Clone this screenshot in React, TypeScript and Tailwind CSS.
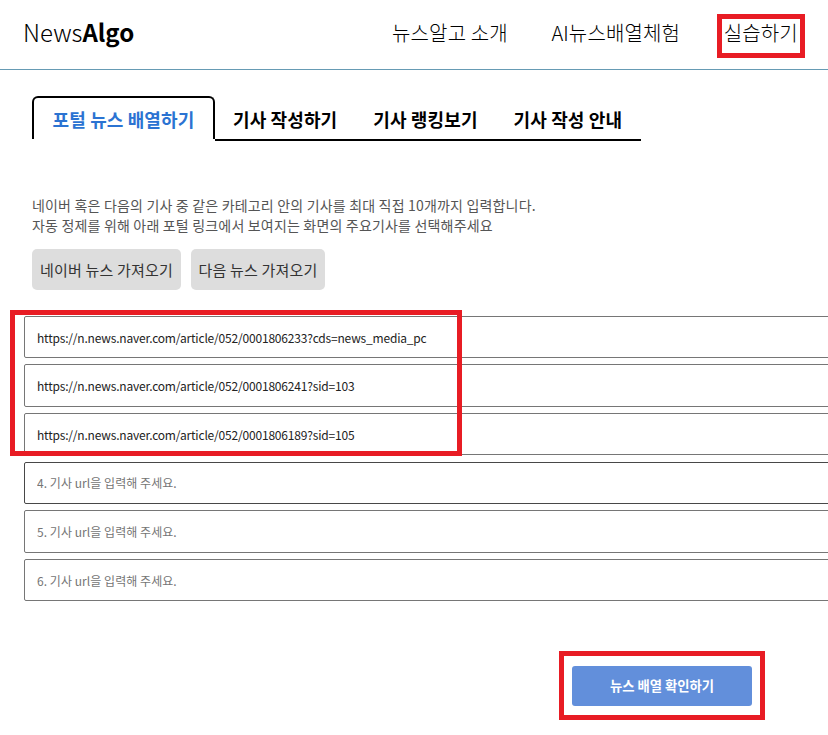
import React from 'react';

const tabs = ['기사 작성하기', '기사 랭킹보기', '기사 작성 안내'];

const articles = [
  'https://n.news.naver.com/article/052/0001806233?cds=news_media_pc',
  'https://n.news.naver.com/article/052/0001806241?sid=103',
  'https://n.news.naver.com/article/052/0001806189?sid=105',
  '',
  '',
  '',
];

const App = () => {
  return (
    <div className="relative w-[828px] h-[735px] overflow-hidden bg-white font-['Noto_Sans_CJK_KR',sans-serif] text-black">
      <header className="flex h-[70px] items-center border-b border-[#669bb4] pl-[23px] pb-[5px]">
        <div className="w-[369px] text-[24px] leading-8 font-light">
          News<span className="font-bold">Algo</span>
        </div>
        <nav className="flex gap-[43.5px] pt-px text-[20px] leading-8 font-light tracking-[0.15px] whitespace-nowrap">
          <a>뉴스알고 소개</a>
          <a>AI뉴스배열체험</a>
          <a>실습하기</a>
        </nav>
      </header>

      <div className="flex pl-8 pt-[26px] text-[18px] font-bold tracking-[0.12px] whitespace-nowrap">
        <div className="flex h-[43px] w-[183px] items-center justify-center rounded-t-md border-2 border-b-0 border-black pt-px text-[#2b73d2]">
          포털 뉴스 배열하기
        </div>
        <div className="flex h-[45px] w-[426px] items-center gap-9 border-b-2 border-black pl-[18px] pt-[3px]">
          {tabs.map((tab) => (
            <span key={tab}>{tab}</span>
          ))}
        </div>
      </div>

      <div className="mt-[54px] pl-8 text-[14px] leading-5 tracking-[0.18px] text-[#555]">
        <p>네이버 혹은 다음의 기사 중 같은 카테고리 안의 기사를 최대 직접 10개까지 입력합니다.</p>
        <p>자동 정제를 위해 아래 포털 링크에서 보여지는 화면의 주요기사를 선택해주세요</p>
      </div>

      <div className="mt-[14px] flex gap-[10px] pl-8 text-[15px] tracking-[0.2px] text-[#333] whitespace-nowrap">
        <button className="h-[41px] w-[149px] rounded-[5px] bg-[#ddd] pt-px">네이버 뉴스 가져오기</button>
        <button className="h-[41px] w-[134px] rounded-[5px] bg-[#ddd] pt-px">다음 뉴스 가져오기</button>
      </div>

      <div className="mt-[25.8px] flex flex-col gap-[6.1px] pl-6">
        {articles.map((url, index) => (
          <input
            key={index}
            className={`h-[42.5px] w-[900px] rounded-[2px] border px-3 text-[12px] tracking-[-0.19px] text-[#222] placeholder:tracking-[0.05px] placeholder:text-[#757575] ${
              index === 3 ? 'border-[#484848]' : 'border-[#767676]'
            }`}
            defaultValue={url}
            placeholder={`${index + 1}. 기사 url을 입력해 주세요.`}
          />
        ))}
      </div>

      <button className="mt-[64.7px] ml-[572px] h-10 w-[180px] rounded-[3px] bg-[#628fdb] text-[13.33px] font-bold text-white">
        뉴스 배열 확인하기
      </button>

      {/* highlight boxes over the page */}
      <div className="absolute left-[717px] top-[14px] h-[44px] w-[88px] border-[5px] border-[#e81c24]" />
      <div className="absolute left-[10px] top-[310px] h-[146px] w-[452px] border-[5px] border-[#e81c24]" />
      <div className="absolute left-[559px] top-[651px] h-[69px] w-[206px] border-[5px] border-[#e81c24]" />
    </div>
  );
};

export default App;
